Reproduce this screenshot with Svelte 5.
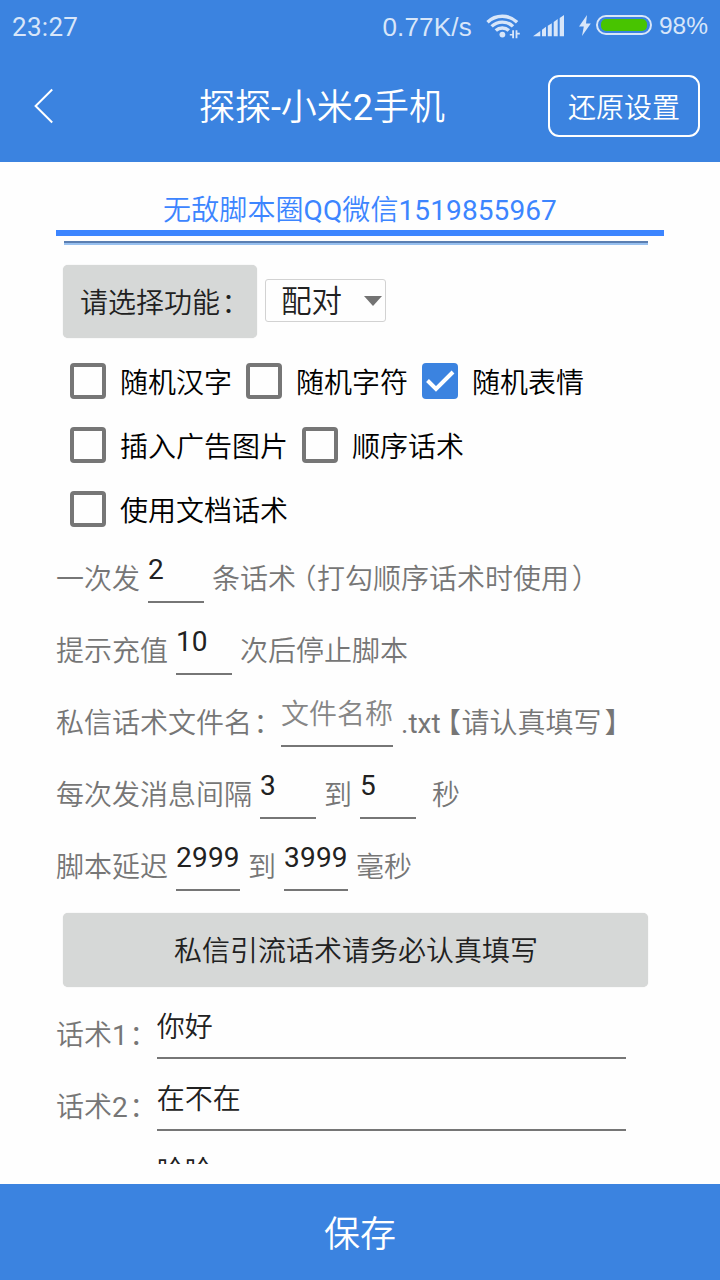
<script>
  let checks = $state([
    [{ label: '随机汉字', on: false }, { label: '随机字符', on: false }, { label: '随机表情', on: true }],
    [{ label: '插入广告图片', on: false }, { label: '顺序话术', on: false }],
    [{ label: '使用文档话术', on: false }]
  ]);
  let scripts = $state([
    { n: 1, text: '你好' },
    { n: 2, text: '在不在' },
    { n: 3, text: '哈哈' }
  ]);
</script>

<div class="screen">
  <div class="status">
    <span class="clock">23:27</span>
    <div class="indicators">
      <span class="speed">0.77K/s</span>
      <svg class="wifi" width="36" height="28" viewBox="0 0 36 28">
        <g fill="none" stroke="#d8e6f9" stroke-width="3.4">
          <path d="M2.5 11.2A21.3 21.3 0 0 1 32.1 11.2" />
          <path d="M6.6 15.4A15.4 15.4 0 0 1 28 15.4" />
          <path d="M10.8 19.6A9.4 9.4 0 0 1 23.8 19.6" />
        </g>
        <circle cx="17.4" cy="23.6" r="2.9" fill="#d8e6f9" />
        <path d="M27.2 19.2h1.8v8h-1.8v-2.6h-2.4v-1.6h2.4zM30.6 19.2h1.8v2.6h2.4v1.6h-2.4v3.8h-1.8z" fill="#d8e6f9" />
      </svg>
      <svg class="signal" width="32" height="22" viewBox="0 0 32 22">
        <path d="M0 21.3L7.3 16v5.3zM9 14.7l4-2.9v9.5H9zM14.8 10.8l4-2.6v13.1h-4zM20.7 7l4-2.9v17.2h-4zM26.7 3l4.3-3v21.3h-4.3z" fill="#d8e6f9" />
      </svg>
      <svg class="bolt" width="12" height="21" viewBox="0 0 12 21">
        <path d="M8 0L0 11.6h4.8L3 21l8.8-12.6H7z" fill="#d8e6f9" />
      </svg>
      <div class="battery"><div class="charge"></div></div>
      <span class="percent">98%</span>
    </div>
  </div>

  <header>
    <svg class="back" width="20" height="36" viewBox="0 0 20 36">
      <path d="M18.2 1.5L1.6 18L18.2 34.5" fill="none" stroke="#fff" stroke-width="2" />
    </svg>
    <h1>探探<b>-</b>小米<b>2</b>手机</h1>
    <button class="reset">还原设置</button>
  </header>

  <main>
    <div class="tab">无敌脚本圈<b>QQ</b>微信<b>1519855967</b></div>
    <div class="rule"></div>

    <div class="pick">
      <div class="gray-btn label-btn"><span>请选择功能<i class="p colon">：</i></span></div>
      <div class="spinner">
        <span>配对</span>
        <svg width="18" height="10" viewBox="0 0 18 10"><path d="M0 0h18L9 10z" fill="#737373" /></svg>
      </div>
    </div>

    <div class="checks">
      {#each checks as row}
        <div class="check-row">
          {#each row as c}
            <button class="check" onclick={() => (c.on = !c.on)}>
              <span class="box" class:on={c.on}>
                {#if c.on}
                  <svg width="36" height="36" viewBox="0 0 36 36"><path d="M5.5 17.5L14 26L31 9" fill="none" stroke="#fff" stroke-width="4" /></svg>
                {/if}
              </span>
              <span class="check-label">{c.label}</span>
            </button>
          {/each}
        </div>
      {/each}
    </div>

    <div class="row">
      <span>一次发</span><input class="num w56" value="2" /><span>条话术<i class="p open">（</i>打勾顺序话术时使用<i class="p close">）</i></span>
    </div>
    <div class="row">
      <span>提示充值</span><input class="num w56" value="10" /><span>次后停止脚本</span>
    </div>
    <div class="row">
      <span>私信话术文件名<i class="p colon">：</i></span><input class="w112" placeholder="文件名称" /><span><b>.txt</b><i class="p open">【</i>请认真填写<i class="p close">】</i></span>
    </div>
    <div class="row">
      <span>每次发消息间隔</span><input class="num w56" value="3" /><span>到</span><input class="num w56" value="5" /><span class="sec">秒</span>
    </div>
    <div class="row">
      <span>脚本延迟</span><input class="num w64" value="2999" /><span>到</span><input class="num w64" value="3999" /><span>毫秒</span>
    </div>

    <div class="gray-btn wide"><span>私信引流话术请务必认真填写</span></div>

    {#each scripts as s}
      <div class="row">
        <span>话术<b>{s.n}</b><i class="p colon">：</i></span><input class="long" bind:value={s.text} />
      </div>
    {/each}
  </main>

  <footer><span>保存</span></footer>
</div>

<style>
  :global(body) { background: #fff; }
  * { box-sizing: border-box; }
  .screen {
    width: 720px; height: 1280px; overflow: hidden;
    display: flex; flex-direction: column;
    font-family: Roboto, "Noto Sans CJK SC", sans-serif;
    font-size: 28px; line-height: 40px; font-weight: 350;
    background: #fefefe; white-space: nowrap;
  }
  button, input { font: inherit; border: 0; padding: 0; margin: 0; background: none; border-radius: 0; outline: 0; }
  b { font-weight: 400; }
  .status {
    height: 50px; flex: none; padding: 0 12px; background: #3b83e0; color: #d8e6f9;
    display: flex; justify-content: space-between; align-items: center;
    font-family: "Liberation Sans", sans-serif; font-size: 26px;
  }
  .clock { font-family: Roboto, sans-serif; font-weight: 400; letter-spacing: .3px; padding-top: 4px; }
  .indicators { display: flex; align-items: center; }
  .speed { letter-spacing: .2px; padding-top: 3px; }
  .wifi { margin: 0 0 0 13px; }
  .signal { margin: 1px 0 0 12px; }
  .bolt { margin-left: 14px; margin-right: 5px; }
  .battery { width: 56px; height: 20px; border: 2px solid #d8e6f9; border-radius: 10px; padding: 2px 3px; margin-right: 7px; }
  .charge { height: 12px; background: #48c400; border-radius: 5px; }
  .percent { font-size: 24.5px; padding-top: 1px; }
  header {
    height: 112px; flex: none; background: #3b83e0; color: #fff;
    display: grid; grid-template-columns: 96px 1fr 172px; align-items: center;
  }
  .back { margin-left: 34px; }
  h1 { margin: 0; padding-top: 4px; font-size: 36px; line-height: 52px; font-weight: inherit; text-align: center; }
  .reset { width: 152px; height: 62px; padding-top: 5px; border: 2px solid #fff; border-radius: 11px; color: #fff; }
  main { height: 1002px; flex: none; overflow: hidden; padding: 0 56px; }
  .tab { height: 74px; padding-top: 29px; border-bottom: 6px solid #3c85ff; color: #3c85ff; text-align: center; letter-spacing: .1px; }
  .rule { height: 4px; margin: 5px 16px 0 8px; background: linear-gradient(#5b7fb2 50%, #98c0ef 50%); }
  .pick { display: flex; gap: 8px; padding: 20px 0 0 7px; align-items: flex-start; }
  .gray-btn { background: #d6d8d7; color: #212121; border-radius: 5px; padding: 4px 0 0 1px; display: flex; align-items: center; justify-content: center; box-shadow: 0 0 1px rgba(0,0,0,.2); }
  .label-btn { width: 194px; height: 73px; }
  .spinner { width: 121px; height: 43px; margin-top: 14px; padding: 0 3px 0 15px; border: 1px solid #d2d2d2; border-radius: 3px; font-size: 30.5px; color: #212121; display: flex; align-items: center; justify-content: space-between; }
  .spinner span { padding-top: 2px; }
  .checks { padding-top: 11px; }
  .check-row { display: flex; height: 64px; }
  .check { display: flex; align-items: center; padding-left: 14px; gap: 14px; color: #000; }
  .check-label { padding-top: 5px; }
  .box { width: 36px; height: 36px; border: 4px solid #767676; border-radius: 4px; display: block; }
  .box.on { border: 0; background: #3b83e0; }
  .box svg { display: block; }
  .row { height: 72px; display: flex; align-items: center; color: #767676; }
  .row > span { padding-top: 4px; }
  .checks + .row { margin-top: 1px; }
  .row input { height: 54px; margin: 0 8px 4px; padding-bottom: 12px; border-bottom: 2px solid #767676; color: #212121; }
  .row input::placeholder { color: #868686; opacity: 1; }
  .row .num { font-weight: 400; }
  .row .w56 { width: 56px; }
  .row .w64 { width: 64px; letter-spacing: .2px; }
  .row .w112 { width: 112px; padding-bottom: 10px; }
  .row .long { width: 469px; padding-bottom: 13px; }
  .sec { margin-left: 8px; }
  .p { display: inline-block; font-style: normal; width: .75em; }
  .colon { text-indent: .05em; }
  .open { text-indent: -.27em; }
  .close { text-indent: .1em; }
  .wide { width: 585px; height: 74px; margin: 11px 0 11px 7px; }
  footer { height: 96px; flex: none; margin-top: 20px; padding-top: 5px; background: #3b83e0; color: #fff; font-size: 36px; display: flex; align-items: center; justify-content: center; }
</style>
